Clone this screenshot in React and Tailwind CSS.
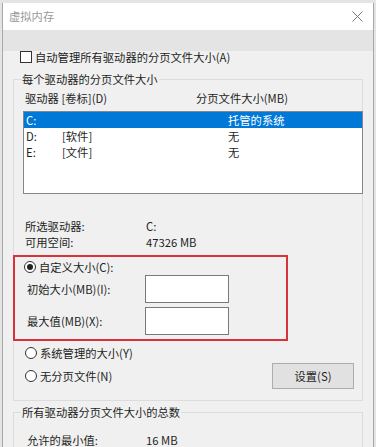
import React from 'react'

const font = { fontFamily: '"Noto Sans CJK SC", "Noto Sans", sans-serif' }

function Radio({ checked }) {
  return (
    <span className="flex h-[12px] w-[12px] shrink-0 items-center justify-center rounded-full border border-[#333] bg-white">
      {checked && <span className="h-[6px] w-[6px] rounded-full bg-[#222]" />}
    </span>
  )
}

function Group({ label, className, children }) {
  return (
    <div className={`border border-[#dcdcdc] ${className}`}>
      <div className="-mt-[9px] ml-[7px] h-[16px] leading-[16px]">
        <span className="bg-[#f0f0f0] px-[1px]">{label}</span>
      </div>
      {children}
    </div>
  )
}

const drives = [
  { letter: 'C:', label: '', size: '托管的系统', selected: true },
  { letter: 'D:', label: '[软件]', size: '无' },
  { letter: 'E:', label: '[文件]', size: '无' },
]

export default function App() {
  return (
    <div className="h-[447px] w-[376px] overflow-hidden bg-[#e4e4e4] text-[11.3px] text-[#1e1e1e]" style={font}>
      <div className="h-[3px]" />
      <div className="ml-[2px] w-[372px] border-x border-[#a8a8a8]">
        {/* title bar */}
        <div className="flex h-[27px] items-center justify-between bg-white pl-[6px] pr-[9px]">
          <span className="text-[#9a9a9a]">虚拟内存</span>
          <svg width="11" height="11" viewBox="0 0 11 11" className="mr-[1px]">
            <path d="M0.5 0.5 L10.5 10.5 M10.5 0.5 L0.5 10.5" stroke="#777" strokeWidth="1" fill="none" />
          </svg>
        </div>

        <div className="h-[420px] bg-[#f0f0f0] px-[10px]">
          <div className="flex h-[12px] items-center pt-0 mt-[21px] ml-[7px] gap-[3px]">
            <span className="h-[12px] w-[12px] border border-[#333] bg-white" />
            <span className="leading-[16px]">自动管理所有驱动器的分页文件大小(A)</span>
          </div>

          <Group label="每个驱动器的分页文件大小" className="mt-[16px] h-[322px]">
            <div className="mt-[3px] flex h-[16px] items-center pl-[11px]">
              <span className="w-[171px]">驱动器 [卷标](D)</span>
              <span>分页文件大小(MB)</span>
            </div>

            <div className="mt-[5px] ml-[9px] h-[83px] w-[340px] border border-[#828790] bg-white">
              {drives.map((d) => (
                <div
                  key={d.letter}
                  className={`flex h-[16px] items-center pl-[2px] ${d.selected ? 'bg-[#0078d7] text-white' : ''}`}
                >
                  <span className="w-[36px]">{d.letter}</span>
                  <span className="w-[166px]">{d.label}</span>
                  <span>{d.size}</span>
                </div>
              ))}
            </div>

            <div className="mt-[24px] pl-[11px]">
              <div className="flex h-[16px] items-center">
                <span className="w-[121px]">所选驱动器:</span>
                <span>C:</span>
              </div>
              <div className="flex h-[16px] items-center">
                <span className="w-[121px]">可用空间:</span>
                <span>47326 MB</span>
              </div>
            </div>

            <div className="-ml-[1px] mt-[5px] h-[86px] w-[275px] border-2 border-[#d8333d]">
              <div className="mt-[2px] ml-[9px] flex h-[16px] items-center gap-[3px]">
                <Radio checked />
                <span>自定义大小(C):</span>
              </div>
              <div className="flex items-center pl-[12px]">
                <span className="w-[118px]">初始大小(MB)(I):</span>
                <span className="h-[28px] w-[84px] border border-[#7a7a7a] bg-white" />
              </div>
              <div className="mt-[4px] flex items-center pl-[12px]">
                <span className="w-[118px]">最大值(MB)(X):</span>
                <span className="h-[28px] w-[84px] border border-[#7a7a7a] bg-white" />
              </div>
            </div>

            <div className="mt-[4px] ml-[11px] flex h-[16px] items-center gap-[3px]">
              <Radio />
              <span>系统管理的大小(Y)</span>
            </div>
            <div className="mt-[2px] flex h-[26px] items-center justify-between pl-[11px] pr-[8px]">
              <div className="flex items-center gap-[3px]">
                <Radio />
                <span>无分页文件(N)</span>
              </div>
              <button className="h-[26px] w-[82px] border border-[#adadad] bg-[#e1e1e1] text-[11.3px] text-[#1e1e1e]" style={font}>
                设置(S)
              </button>
            </div>
          </Group>

          <Group label="所有驱动器分页文件大小的总数" className="mt-[11px] h-[60px]">
            <div className="mt-[12px] flex h-[16px] items-center pl-[13px]">
              <span className="w-[119px]">允许的最小值:</span>
              <span>16 MB</span>
            </div>
          </Group>
        </div>
      </div>
    </div>
  )
}
